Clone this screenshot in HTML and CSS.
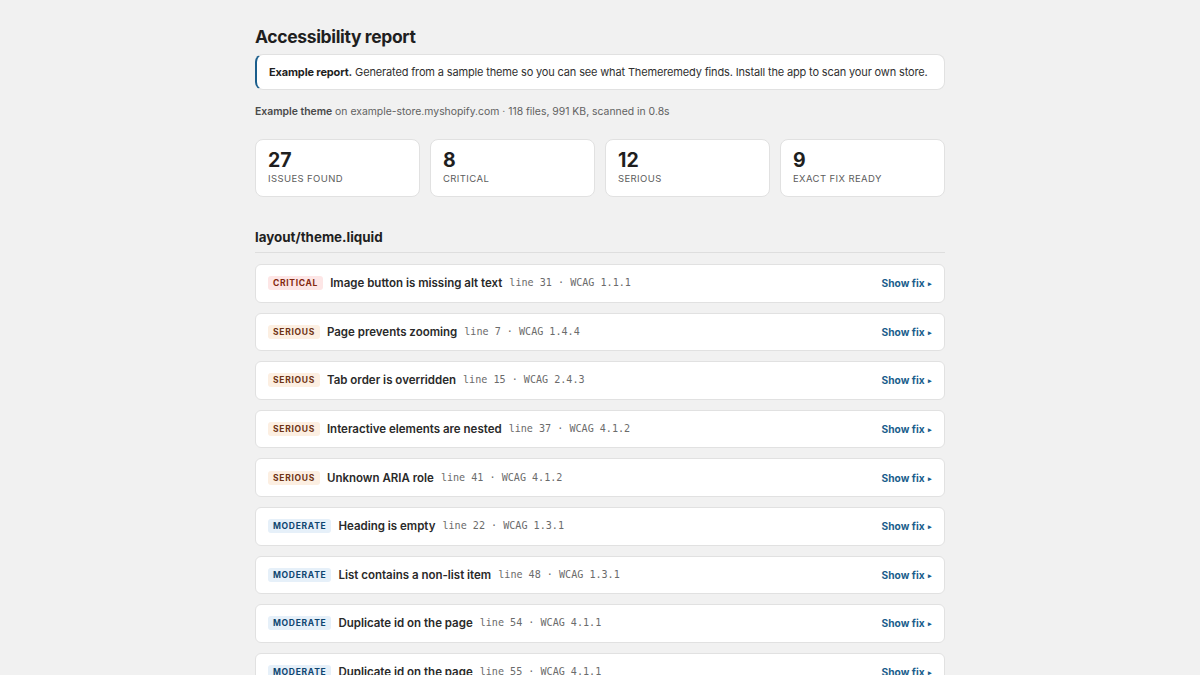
FILE: index.html
```html
<!DOCTYPE html>
<html lang="en">
<head>
<meta charset="utf-8">
<title>Accessibility report</title>
<link rel="stylesheet" href="styles.css">
</head>
<body>
<main class="page">
  <h1 class="title">Accessibility report</h1>
  <div class="notice"><strong>Example report.</strong> Generated from a sample theme so you can see what Themeremedy finds. Install the app to scan your own store.</div>
  <p class="meta"><strong>Example theme</strong> on example-store.myshopify.com · 118 files, 991 KB, scanned in 0.8s</p>

  <div class="stats">
    <div class="stat"><div class="stat-num">27</div><div class="stat-label">Issues found</div></div>
    <div class="stat"><div class="stat-num">8</div><div class="stat-label">Critical</div></div>
    <div class="stat"><div class="stat-num">12</div><div class="stat-label">Serious</div></div>
    <div class="stat"><div class="stat-num">9</div><div class="stat-label">Exact fix ready</div></div>
  </div>

  <h2 class="file">layout/theme.liquid</h2>
  <ul class="issues">
    <li class="issue"><span class="badge critical">Critical</span><span class="issue-title">Image button is missing alt text</span><code class="loc">line 31 · WCAG 1.1.1</code><a class="fix" href="#">Show fix <span class="arrow">▸</span></a></li>
    <li class="issue"><span class="badge serious">Serious</span><span class="issue-title">Page prevents zooming</span><code class="loc">line 7 · WCAG 1.4.4</code><a class="fix" href="#">Show fix <span class="arrow">▸</span></a></li>
    <li class="issue"><span class="badge serious">Serious</span><span class="issue-title">Tab order is overridden</span><code class="loc">line 15 · WCAG 2.4.3</code><a class="fix" href="#">Show fix <span class="arrow">▸</span></a></li>
    <li class="issue"><span class="badge serious">Serious</span><span class="issue-title">Interactive elements are nested</span><code class="loc">line 37 · WCAG 4.1.2</code><a class="fix" href="#">Show fix <span class="arrow">▸</span></a></li>
    <li class="issue"><span class="badge serious">Serious</span><span class="issue-title">Unknown ARIA role</span><code class="loc">line 41 · WCAG 4.1.2</code><a class="fix" href="#">Show fix <span class="arrow">▸</span></a></li>
    <li class="issue"><span class="badge moderate">Moderate</span><span class="issue-title">Heading is empty</span><code class="loc">line 22 · WCAG 1.3.1</code><a class="fix" href="#">Show fix <span class="arrow">▸</span></a></li>
    <li class="issue"><span class="badge moderate">Moderate</span><span class="issue-title">List contains a non-list item</span><code class="loc">line 48 · WCAG 1.3.1</code><a class="fix" href="#">Show fix <span class="arrow">▸</span></a></li>
    <li class="issue"><span class="badge moderate">Moderate</span><span class="issue-title">Duplicate id on the page</span><code class="loc">line 54 · WCAG 4.1.1</code><a class="fix" href="#">Show fix <span class="arrow">▸</span></a></li>
    <li class="issue"><span class="badge moderate">Moderate</span><span class="issue-title">Duplicate id on the page</span><code class="loc">line 55 · WCAG 4.1.1</code><a class="fix" href="#">Show fix <span class="arrow">▸</span></a></li>
  </ul>
</main>
</body>
</html>
```

FILE: styles.css
```css
* { box-sizing: border-box; }

html, body {
  margin: 0;
  padding: 0;
  background: #f1f1f1;
  color: #303030;
  font-family: Inter, "Noto Sans", "Liberation Sans", sans-serif;
  -webkit-font-smoothing: antialiased;
}

.page {
  width: 690px;
  margin: 0 auto;
  padding-top: 25px;
}

.title {
  margin: 0 0 5px;
  font-size: 17.5px;
  line-height: 24px;
  font-weight: 700;
  color: #1f1f1f;
  letter-spacing: -0.35px;
}

.notice {
  background: #fff;
  border: 1px solid #e1e1e1;
  border-left: 2px solid #1b5e8c;
  border-radius: 8px;
  padding: 9px 12px;
  font-size: 11px;
  line-height: 16px;
  letter-spacing: -0.15px;
  white-space: nowrap;
  color: #303030;
}
.notice strong { font-weight: 700; color: #1f1f1f; }

.meta {
  margin: 14px 0 0;
  font-size: 10.4px;
  line-height: 16px;
  color: #616161;
}
.meta strong { font-weight: 600; color: #4a4a4a; }

.stats {
  display: grid;
  grid-template-columns: repeat(4, 1fr);
  gap: 10px;
  margin-top: 19px;
}

.stat {
  background: #fff;
  border: 1px solid #e1e1e1;
  border-radius: 8px;
  padding: 9px 12px 10px;
}

.stat-num {
  font-size: 19.5px;
  line-height: 22px;
  font-weight: 700;
  color: #1f1f1f;
}

.stat-label {
  margin-top: 1px;
  font-size: 9.5px;
  line-height: 14px;
  letter-spacing: 0.4px;
  text-transform: uppercase;
  color: #5c5c5c;
}

.file {
  margin: 30px 0 0;
  padding-bottom: 5px;
  border-bottom: 1px solid #dedede;
  font-size: 13.4px;
  line-height: 20px;
  font-weight: 700;
  color: #1f1f1f;
}

.issues {
  list-style: none;
  margin: 11px 0 0;
  padding: 0;
  display: flex;
  flex-direction: column;
  gap: 10px;
}

.issue {
  display: flex;
  align-items: center;
  height: 38.6px;
  background: #fff;
  border: 1px solid #e1e1e1;
  border-radius: 6px;
  padding: 0 12px;
  line-height: 18px;
}

.badge {
  font-size: 8.5px;
  line-height: 14px;
  font-weight: 700;
  letter-spacing: 0.7px;
  text-transform: uppercase;
  padding: 0 5px;
  border-radius: 3px;
  margin-right: 7px;
}
.badge.critical { background: #fde6e6; color: #84280f; }
.badge.serious { background: #fcefe2; color: #6e3214; }
.badge.moderate { background: #e6f0f9; color: #0f4670; }

.issue-title {
  font-size: 11.5px;
  font-weight: 600;
  color: #2a2a2a;
}

.loc {
  margin-left: 7px;
  font-family: "DejaVu Sans Mono", "Liberation Mono", monospace;
  font-size: 10.1px;
  color: #6b6b6b;
}

.fix {
  margin-left: auto;
  font-size: 10.2px;
  font-weight: 700;
  color: #1b5e8c;
  text-decoration: none;
}
.fix .arrow {
  font-size: 7px;
  line-height: 1;
  margin-left: 1px;
  vertical-align: 1px;
}
```
